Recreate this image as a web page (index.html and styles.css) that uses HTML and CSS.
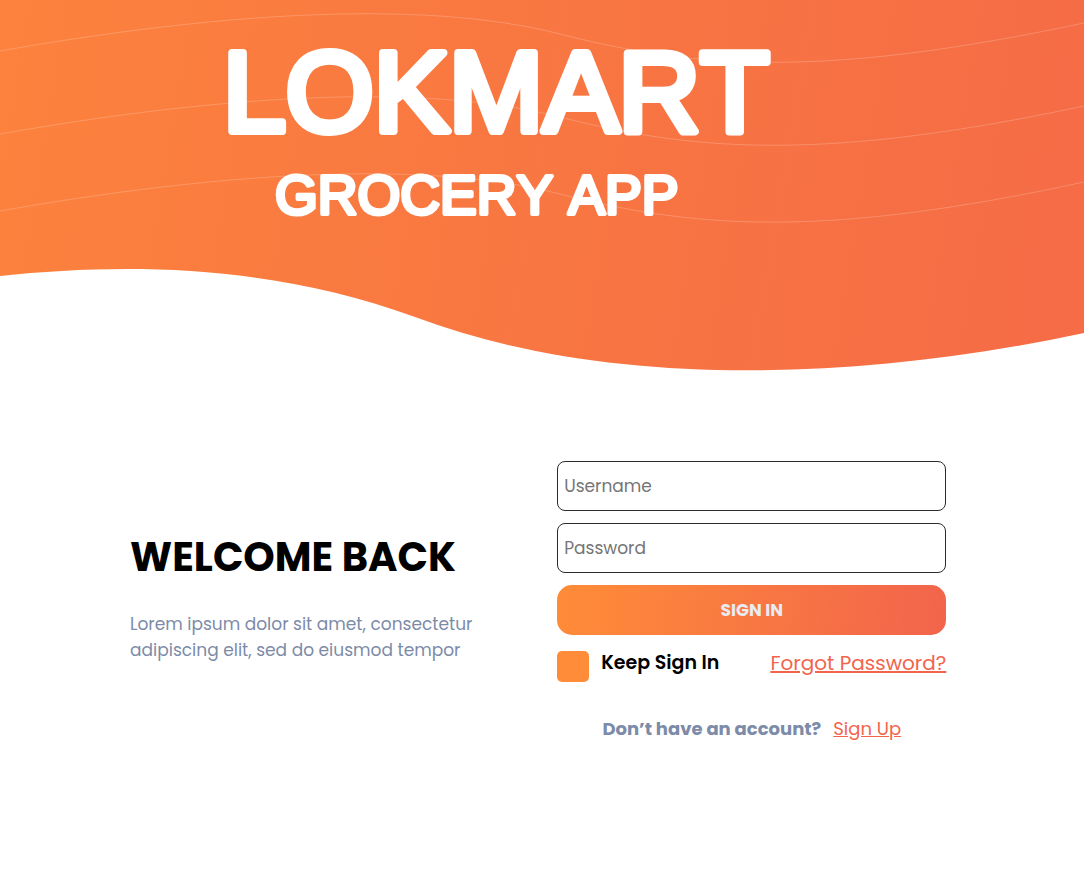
FILE: index.html
```html
<!DOCTYPE html>
<html lang="en">
<head>
  <meta charset="utf-8">
  <meta name="viewport" content="width=device-width, initial-scale=1">
  <title>Lokmart Grocery App</title>
  <link rel="stylesheet" href="styles.css">
</head>
<body>
  <header class="hero">
    <svg class="hero-art" viewBox="0 0 1084 372">
      <defs>
        <linearGradient id="sunset" gradientUnits="userSpaceOnUse" x1="0" y1="0" x2="1070" y2="180">
          <stop offset="0" stop-color="#fc823d"/>
          <stop offset="1" stop-color="#f56c46"/>
        </linearGradient>
      </defs>
      <path fill="url(#sunset)" d="M0 0H1084V333C830 387 590 383 415 317C270 264 125 263 0 276Z"/>
      <g class="hero-lines">
        <path d="M0 51C210 14 420 -2 560 34S830 77 1084 23"/>
        <path d="M0 134C210 97 420 81 560 117S830 160 1084 106"/>
        <path d="M0 211C210 174 420 158 560 194S830 237 1084 182"/>
      </g>
      <text class="hero-title" x="223" y="131">LOKMART</text>
      <text class="hero-subtitle" x="275" y="214">GROCERY APP</text>
    </svg>
  </header>

  <main class="login">
    <section class="welcome">
      <h1 class="welcome-title">WELCOME BACK</h1>
      <p class="welcome-text">Lorem ipsum dolor sit amet, consectetur adipiscing elit, sed do eiusmod tempor</p>
    </section>

    <form class="form">
      <input class="field" type="text" placeholder="Username" aria-label="Username">
      <input class="field" type="password" placeholder="Password" aria-label="Password">
      <button class="submit" type="submit">SIGN IN</button>
      <div class="options">
        <label class="keep"><input class="keep-box" type="checkbox">Keep Sign In</label>
        <a class="link forgot" href="#">Forgot Password?</a>
      </div>
      <p class="signup"><strong>Don’t have an account?</strong><a class="link" href="#">Sign Up</a></p>
    </form>
  </main>
</body>
</html>
```
FILE: styles.css
```css
* {
  box-sizing: border-box;
}

body {
  margin: 0;
  background: #fff;
  color: #000;
  font-family: Poppins, Inter, sans-serif;
}

.hero-art {
  display: block;
  width: 100%;
  height: auto;
}

.hero-lines {
  fill: none;
  stroke: #fff;
  stroke-opacity: 0.2;
}

.hero-title,
.hero-subtitle {
  fill: #fff;
  stroke: #fff;
  stroke-linejoin: round;
  font-family: "Arial Rounded MT Bold", "Liberation Sans", sans-serif;
  font-weight: 400;
  font-kerning: none;
}

.hero-title {
  font-size: 113px;
  stroke-width: 8px;
}

.hero-subtitle {
  font-size: 55px;
  stroke-width: 4px;
}

.login {
  display: grid;
  grid-template-columns: 363fr 389fr;
  column-gap: 64px;
  align-items: center;
  padding: 89px 12.7% 40px 12%;
}

.welcome-title {
  margin: 0 0 24px;
  font-size: 40px;
  line-height: 60px;
  font-weight: 700;
  white-space: nowrap;
}

.welcome-text {
  margin: 0 0 14px;
  color: #7c8ba8;
  font-size: 17px;
  line-height: 26px;
}

.form {
  display: flex;
  flex-direction: column;
}

.field,
.submit {
  width: 100%;
  height: 50px;
  margin: 0 0 12px;
  font-family: inherit;
  font-size: 17px;
}

.field {
  padding: 0 6px;
  border: 1px solid #2b2b2f;
  border-radius: 8px;
  background: #fff;
}

.field::placeholder {
  color: #757575;
}

.submit {
  border: 0;
  border-radius: 15px;
  background: linear-gradient(100deg, #ff8c38, #f2644c);
  color: #eaeaf2;
  font-weight: 700;
}

.options {
  display: flex;
  justify-content: space-between;
  align-items: flex-start;
  line-height: 32px;
}

.keep {
  display: flex;
  gap: 12px;
  font-size: 19px;
  font-weight: 600;
  white-space: nowrap;
}

.keep-box {
  appearance: none;
  width: 32px;
  height: 31px;
  margin: 4px 0 0;
  border-radius: 5px;
  background: #ff8c38;
}

.keep-box:checked {
  background: #f2644c;
}

.link {
  color: #f2644c;
}

.forgot {
  font-size: 20px;
  white-space: nowrap;
}

.signup {
  display: flex;
  justify-content: center;
  gap: 12px;
  margin: 34px 0 0;
  color: #7c8ba8;
  font-size: 18px;
  line-height: 26px;
}

.signup strong {
  font-weight: 700;
}

@media (max-width: 800px) {
  .login {
    grid-template-columns: 1fr;
    row-gap: 32px;
  }
}
```
